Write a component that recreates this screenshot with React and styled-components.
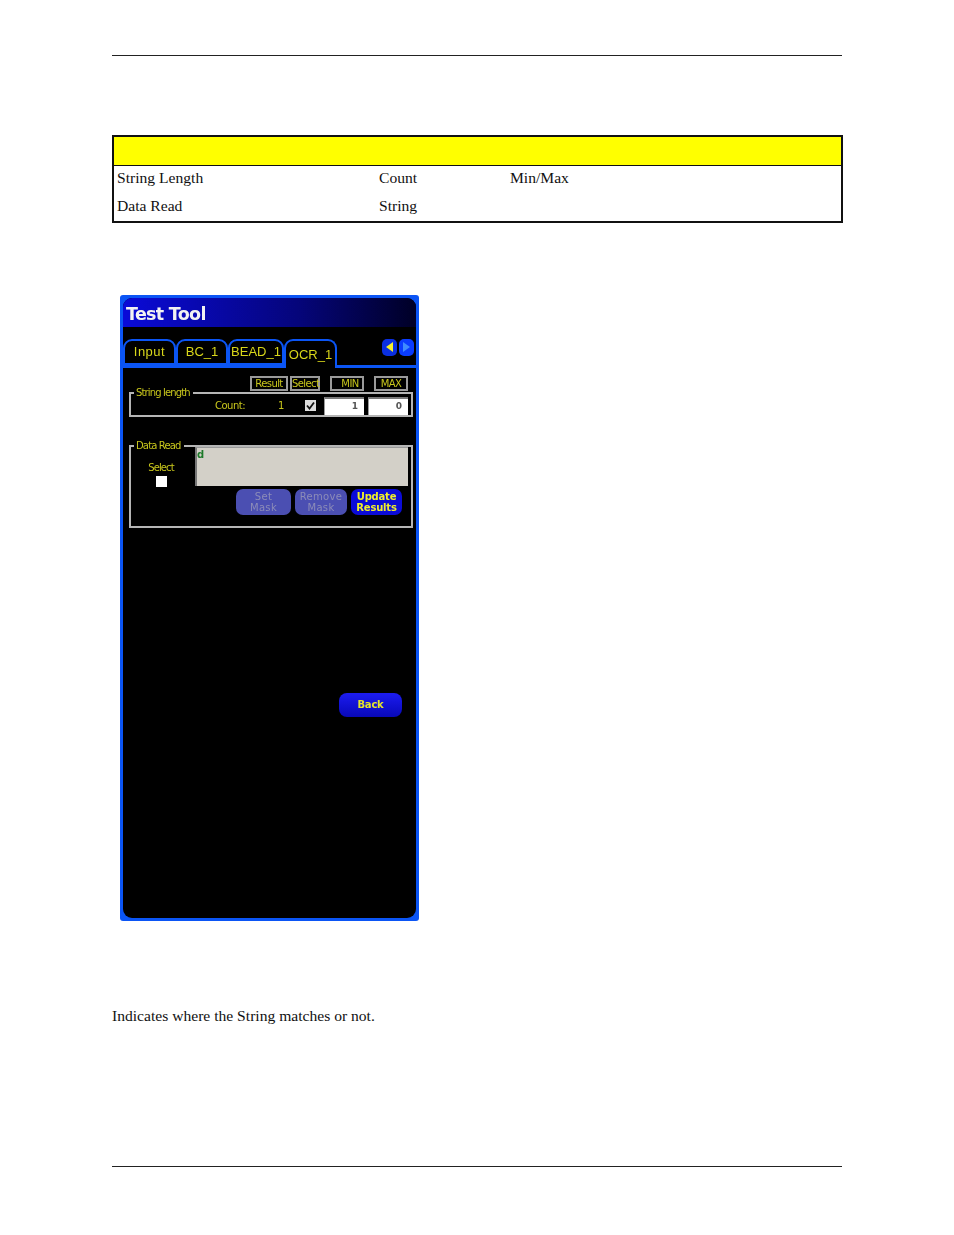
import React from "react";
import styled, { createGlobalStyle } from "styled-components";

const GlobalStyle = createGlobalStyle`
  body {
    margin: 0;
    background: #fff;
    font-family: "Liberation Serif", serif;
    color: #111;
  }
`;

function App() {
  return (
    <Page>
      <GlobalStyle />
      <Rule />
      <SpecTable>
        <colgroup>
          <col width="263" />
          <col width="131" />
          <col />
        </colgroup>
        <tbody>
          <tr>
            <HeadCell colSpan={3} />
          </tr>
          <tr>
            <Cell>String Length</Cell>
            <Cell>Count</Cell>
            <Cell>Min/Max</Cell>
          </tr>
          <tr>
            <Cell>Data Read</Cell>
            <Cell>String</Cell>
            <Cell />
          </tr>
        </tbody>
      </SpecTable>

      <Device>
        <Screen>
          <TitleBar>Test Tool</TitleBar>
          <TabBar>
            <Tab $w={53} $ls={0.5}>Input</Tab>
            <Tab $w={52}>BC_1</Tab>
            <Tab $w={56}>BEAD_1</Tab>
            <Tab $w={53} $active>OCR_1</Tab>
            <Arrows>
              <ArrowButton>
                <svg width="9" height="10" viewBox="0 0 9 10">
                  <path d="M8 0v10L1 5z" fill="#f4f02a" />
                </svg>
              </ArrowButton>
              <ArrowButton $bright>
                <svg width="9" height="10" viewBox="0 0 9 10">
                  <path d="M1 0v10l7-5z" fill="#3f8cff" />
                </svg>
              </ArrowButton>
            </Arrows>
          </TabBar>

          <HeadRow>
            <HeadButton $w={38}>Result</HeadButton>
            <HeadButton $w={30}>Select</HeadButton>
            <HeadButton $w={34} $ml={10} $indent={6}>MIN</HeadButton>
            <HeadButton $w={34} $ml={10}>MAX</HeadButton>
          </HeadRow>

          <LengthGroup>
            <GroupLegend>String length</GroupLegend>
            <LengthRow>
              <CountLabel>Count:</CountLabel>
              <CountValue>1</CountValue>
              <CheckBox $checked>
                <svg width="9" height="9" viewBox="0 0 9 9">
                  <path d="M1 4.5l2.5 3L8 1.5" fill="none" stroke="#111" strokeWidth="1.8" />
                </svg>
              </CheckBox>
              <NumberBox>1</NumberBox>
              <NumberBox>0</NumberBox>
            </LengthRow>
          </LengthGroup>

          <ReadGroup>
            <GroupLegend>Data Read</GroupLegend>
            <ReadTop>
              <SelectCol>
                <SelectLabel>Select</SelectLabel>
                <CheckBox />
              </SelectCol>
              <ReadBox>d</ReadBox>
            </ReadTop>
            <ActionRow>
              <ActionButton $w={55} $disabled>Set<br />Mask</ActionButton>
              <ActionButton $w={52} $disabled>Remove<br />Mask</ActionButton>
              <ActionButton $w={51}>Update<br />Results</ActionButton>
            </ActionRow>
          </ReadGroup>

          <BackRow>
            <BackButton>Back</BackButton>
          </BackRow>
        </Screen>
      </Device>

      <Note>Indicates where the String matches or not.</Note>
      <FooterRule />
    </Page>
  );
}

const Page = styled.div`
  width: 954px;
  height: 1235px;
  padding: 55px 112px 0;
  box-sizing: border-box;
  overflow: hidden;
`;
const Rule = styled.div`
  width: 730px;
  height: 1px;
  background: #222;
`;
const SpecTable = styled.table`
  width: 731px;
  margin-top: 79px;
  border: 2px solid #111;
  border-collapse: collapse;
  table-layout: fixed;
  font-size: 15.6px;
  line-height: 17px;
`;
const HeadCell = styled.td`
  height: 28px;
  padding: 0;
  background: #ffff00;
  border-bottom: 1px solid #111;
`;
const Cell = styled.td`
  height: 28px;
  padding: 0 0 4px 3px;
  box-sizing: border-box;
  vertical-align: middle;
`;
const Device = styled.div`
  width: 299px;
  height: 626px;
  margin: 72px 0 0 8px;
  padding: 3px;
  box-sizing: border-box;
  background: #0b55f5;
  border-radius: 3px;
  filter: blur(0.45px);
`;
const Screen = styled.div`
  height: 100%;
  background: #000;
  border-radius: 9px;
  overflow: hidden;
  font-family: "DejaVu Sans", sans-serif;
`;
const TitleBar = styled.div`
  height: 29px;
  padding-left: 3px;
  background: linear-gradient(90deg, #0a0ad8 0%, #05057a 60%, #000026 100%);
  color: #f2f2f2;
  font-size: 17.5px;
  font-weight: 700;
  letter-spacing: -0.7px;
  line-height: 32px;
`;
const TabBar = styled.div`
  display: flex;
  align-items: flex-end;
  height: 29px;
  margin-top: 9px;
  border-bottom: 3px solid #0b55f5;
  position: relative;
`;
const Tab = styled.div`
  width: ${(p) => p.$w}px;
  height: ${(p) => (p.$active ? 29 : 26)}px;
  box-sizing: border-box;
  margin-bottom: ${(p) => (p.$active ? -3 : 0)}px;
  background: #000;
  border: 2px solid #0b55f5;
  border-bottom: ${(p) => (p.$active ? "none" : "2px solid #0b55f5")};
  border-radius: 9px 9px 0 0;
  color: #d8d61a;
  font-family: "Liberation Sans", sans-serif;
  font-size: 13px;
  letter-spacing: ${(p) => p.$ls || 0}px;
  line-height: ${(p) => (p.$active ? 28 : 21)}px;
  text-align: center;
  white-space: nowrap;
`;
const Arrows = styled.div`
  display: flex;
  gap: 2px;
  position: absolute;
  right: 2px;
  top: 3px;
`;
const ArrowButton = styled.div`
  width: 15px;
  height: 17px;
  background: ${(p) => (p.$bright ? "#0a3cff" : "#0a2fe0")};
  border-radius: 5px;
  display: flex;
  align-items: center;
  justify-content: center;
`;
const HeadRow = styled.div`
  display: flex;
  justify-content: flex-end;
  margin: 8px 8px 0 0;
`;
const HeadButton = styled.div`
  width: ${(p) => p.$w}px;
  height: 15px;
  margin-left: ${(p) => p.$ml || 2}px;
  padding-left: ${(p) => p.$indent || 0}px;
  box-sizing: border-box;
  border: 2px solid #9a9a9a;
  color: #c9c71c;
  font-size: 10px;
  letter-spacing: -0.6px;
  line-height: 11px;
  text-align: center;
`;
const GroupLegend = styled.legend`
  margin-left: 3px;
  padding: 0 3px 0 2px;
  color: #c9c71c;
  font-size: 10px;
  letter-spacing: -0.85px;
  line-height: 12px;
`;
const LengthGroup = styled.fieldset`
  width: 284px;
  height: 30px;
  margin: -4px 0 0 6px;
  padding: 0;
  box-sizing: border-box;
  border: 2px solid #b5b5b5;
  min-inline-size: 0;
`;
const LengthRow = styled.div`
  display: flex;
  align-items: center;
  height: 20px;
  margin-top: -3px;
  padding-left: 84px;
`;
const CountLabel = styled.span`
  width: 63px;
  color: #c9c71c;
  font-size: 10px;
  letter-spacing: -0.5px;
`;
const CountValue = styled.span`
  width: 27px;
  color: #c9c71c;
  font-size: 10px;
`;
const CheckBox = styled.div`
  flex: none;
  width: 11px;
  height: 11px;
  margin-right: ${(p) => (p.$checked ? 4 : 0)}px;
  background: ${(p) => (p.$checked ? "#ddd" : "#fff")};
  display: flex;
  align-items: center;
  justify-content: center;
`;
const NumberBox = styled.div`
  width: 40px;
  height: 18px;
  margin-left: 4px;
  padding-right: 6px;
  box-sizing: border-box;
  background: #fff;
  border-top: 2px solid #777;
  border-left: 1px solid #999;
  color: #555;
  font-size: 9px;
  font-weight: 700;
  line-height: 15px;
  text-align: right;
`;
const ReadGroup = styled.fieldset`
  width: 284px;
  height: 88px;
  margin: 23px 0 0 6px;
  padding: 0 3px 0 0;
  box-sizing: border-box;
  border: 2px solid #b5b5b5;
  min-inline-size: 0;
`;
const ReadTop = styled.div`
  display: flex;
  margin-top: -5px;
`;
const SelectCol = styled.div`
  width: 60px;
  margin-right: 4px;
  padding-top: 14px;
  display: flex;
  flex-direction: column;
  align-items: center;
  gap: 1px;
`;
const SelectLabel = styled.div`
  color: #c9c71c;
  font-size: 10px;
  letter-spacing: -0.9px;
  line-height: 14px;
`;
const ReadBox = styled.div`
  width: 213px;
  height: 39px;
  box-sizing: border-box;
  background: #d3d0c8;
  border-left: 2px solid #777;
  border-top: 1px solid #999;
  color: #1d7a2a;
  font-size: 10px;
  font-weight: 700;
  line-height: 13px;
`;
const ActionRow = styled.div`
  display: flex;
  justify-content: flex-end;
  gap: 4px;
  margin: 2px 6px 0 0;
`;
const ActionButton = styled.div`
  width: ${(p) => p.$w}px;
  height: 26px;
  background: ${(p) => (p.$disabled ? "#4b4fb2" : "#0b0bd8")};
  border-radius: 7px;
  color: ${(p) => (p.$disabled ? "#8c8cb8" : "#f0f02a")};
  font-size: 10px;
  font-weight: ${(p) => (p.$disabled ? 400 : 700)};
  letter-spacing: ${(p) => (p.$disabled ? 0.3 : -0.2)}px;
  line-height: 11px;
  padding-top: 2px;
  box-sizing: border-box;
  text-align: center;
`;
const BackRow = styled.div`
  display: flex;
  justify-content: flex-end;
  margin: 165px 14px 0 0;
`;
const BackButton = styled.div`
  width: 63px;
  height: 24px;
  background: linear-gradient(180deg, #1c1cf0, #0808b8);
  border-radius: 8px;
  color: #e6e62a;
  font-size: 10px;
  font-weight: 700;
  letter-spacing: -0.2px;
  line-height: 24px;
  text-align: center;
`;
const Note = styled.p`
  margin: 86px 0 0;
  font-size: 15.6px;
  line-height: 18px;
`;
const FooterRule = styled.div`
  width: 730px;
  height: 1px;
  margin-top: 141px;
  background: #222;
`;

export default App;
